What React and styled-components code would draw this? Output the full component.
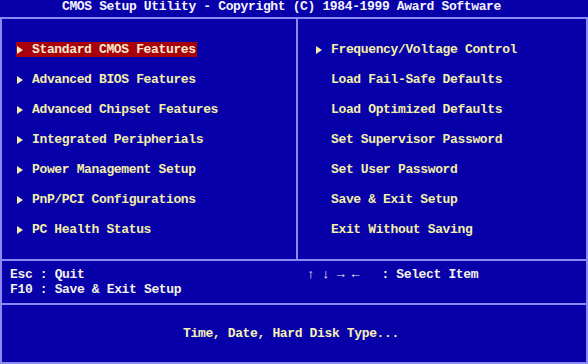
import React from "react";
import styled, { createGlobalStyle } from "styled-components";

const GlobalStyle = createGlobalStyle`
	html, body {
		margin: 0;
		padding: 0;
		background: #0800a8;
	}
`;

const Screen = styled.div`
	width: 588px;
	height: 364px;
	background: #0800a8;
	overflow: hidden;
	display: flex;
	flex-direction: column;
	font-family: "Liberation Mono", "DejaVu Sans Mono", monospace;
	font-weight: bold;
	font-size: 13px;
	letter-spacing: -0.36px;
	white-space: pre;
`;

const TitleBar = styled.div`
	height: 17px;
	line-height: 13px;
	padding-right: 25px;
	text-align: center;
	color: #f4f4ff;
`;

const Frame = styled.div`
	flex: 1;
	box-sizing: border-box;
	border: 2px solid #8a8af5;
	display: flex;
	flex-direction: column;
`;

const MenuPanel = styled.div`
	height: 240px;
	display: grid;
	grid-template-columns: 296px 1fr;
`;

const MenuColumn = styled.ul`
	margin: 0;
	list-style: none;
	box-sizing: border-box;
	display: flex;
	flex-direction: column;
	align-items: flex-start;
	gap: 15px;
	padding: 23px 0 0 ${({ $indent }) => $indent}px;
	border-right: ${({ $divider }) => ($divider ? "2px solid #8a8af5" : "none")};
`;

const MenuItem = styled.li`
	display: flex;
	align-items: center;
	height: 15px;
	line-height: 15px;
	padding: 0 1px;
	color: ${({ $selected }) => ($selected ? "#f8ecd0" : "#f2f0a8")};
	background: ${({ $selected }) => ($selected ? "#a8000c" : "transparent")};
`;

const ArrowBox = styled.span`
	width: 15px;
	display: flex;
	align-items: center;
`;

const Footer = styled.div`
	border-top: 2px solid #8a8af5;
	border-bottom: 2px solid #8a8af5;
	display: grid;
	grid-template-columns: 296px 1fr;
	padding-top: 6px;
	height: 36px;
	color: #f2f2ea;
	line-height: 15px;
`;

const KeyColumn = styled.div`
	padding-left: ${({ $indent }) => $indent}px;
`;

const StatusBar = styled.div`
	flex: 1;
	display: flex;
	align-items: center;
	justify-content: center;
	padding-right: 6px;
	color: #f4f2b8;
`;

function Triangle() {
	return (
		<svg width="6" height="8" viewBox="0 0 6 8">
			<path d="M0 0 L6 4 L0 8 Z" fill="currentColor" />
		</svg>
	);
}

const leftItems = [
	"Standard CMOS Features",
	"Advanced BIOS Features",
	"Advanced Chipset Features",
	"Integrated Peripherials",
	"Power Management Setup",
	"PnP/PCI Configurations",
	"PC Health Status",
];

const rightItems = [
	{ label: "Frequency/Voltage Control", sub: true },
	{ label: "Load Fail-Safe Defaults" },
	{ label: "Load Optimized Defaults" },
	{ label: "Set Supervisor Password" },
	{ label: "Set User Password" },
	{ label: "Save & Exit Setup" },
	{ label: "Exit Without Saving" },
];

function Entry({ label, sub, selected }) {
	return (
		<MenuItem $selected={selected}>
			<ArrowBox>{sub && <Triangle />}</ArrowBox>
			{label}
		</MenuItem>
	);
}

export default function App() {
	return (
		<>
			<GlobalStyle />
			<Screen>
				<TitleBar>CMOS Setup Utility - Copyright (C) 1984-1999 Award Software</TitleBar>
				<Frame>
					<MenuPanel>
						<MenuColumn $indent={14} $divider>
							{leftItems.map((label, i) => (
								<Entry key={label} label={label} sub selected={i === 0} />
							))}
						</MenuColumn>
						<MenuColumn $indent={17}>
							{rightItems.map((item) => (
								<Entry key={item.label} label={item.label} sub={item.sub} />
							))}
						</MenuColumn>
					</MenuPanel>
					<Footer>
						<KeyColumn $indent={8}>
							<div>Esc : Quit</div>
							<div>F10 : Save & Exit Setup</div>
						</KeyColumn>
						<KeyColumn $indent={9}>
							<div>↑ ↓ → ←   : Select Item</div>
						</KeyColumn>
					</Footer>
					<StatusBar>Time, Date, Hard Disk Type...</StatusBar>
				</Frame>
			</Screen>
		</>
	);
}
